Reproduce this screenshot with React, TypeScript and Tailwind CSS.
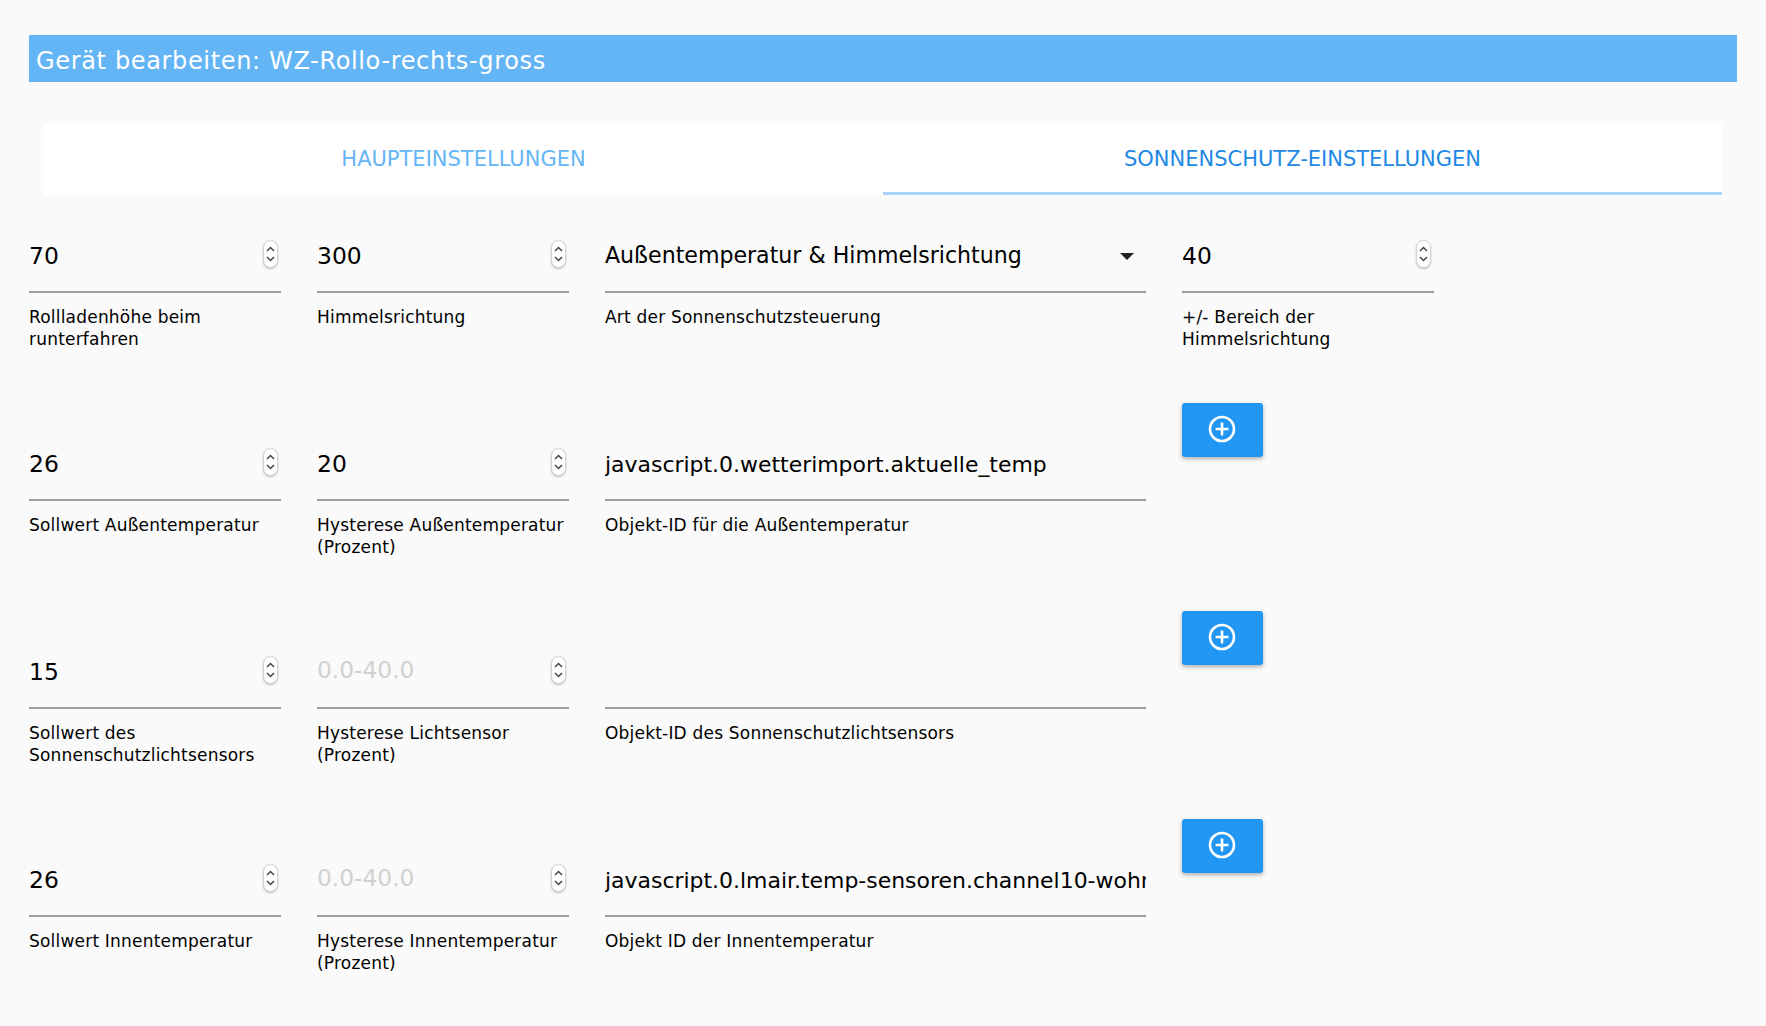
import React from "react";

const uiFont = "font-['DejaVu_Sans',sans-serif]";

function Spinner() {
  return (
    <span className="absolute right-[3px] top-[16px] w-[15px] h-[28px] rounded-[8px] bg-white border border-[#d4d4d4] shadow-[0_1px_2px_rgba(0,0,0,0.25)] flex items-center justify-center">
      <svg width="11" height="20" viewBox="0 0 11 20" fill="none" stroke="#444" strokeWidth="1.5">
        <path d="M2 7 5.500 3.500 9 7" />
        <path d="M2 13l3.500 3.500L9 13" />
      </svg>
    </span>
  );
}

function Field({
  value,
  placeholder,
  label,
  number,
  select,
}: {
  value?: string;
  placeholder?: string;
  label: string;
  number?: boolean;
  select?: boolean;
}) {
  return (
    <div className="min-w-0">
      <div className="relative h-[69px] border-b-2 border-[#9e9e9e] flex items-center pb-[3px]">
        {select ? (
          <span className={`${uiFont} text-[22.1px] text-black whitespace-nowrap`}>{value}</span>
        ) : value ? (
          <span className={`${uiFont} ${number ? "text-[23.4px]" : "text-[21.95px]"} pt-[2px] text-black whitespace-nowrap overflow-hidden w-full`}>{value}</span>
        ) : (
          <span className={`${uiFont} text-[23.3px] text-[#d1d1d1] whitespace-nowrap -mt-[4px]`}>{placeholder}</span>
        )}
        {number && <Spinner />}
        {select && (
          <span className="absolute right-[12px] top-[29px] w-0 h-0 border-l-[7px] border-r-[7px] border-t-[7px] border-l-transparent border-r-transparent border-t-[#222]" />
        )}
      </div>
      <div className={`${uiFont} mt-[13px] text-[17px] tracking-[0.2px] leading-[22px] text-black`}>{label}</div>
    </div>
  );
}

function AddButton() {
  return (
    <div className="self-start mt-[-29px] w-[81px] h-[54px] rounded-[3px] bg-[#2196f3] shadow-[0_2px_4px_rgba(0,0,0,0.3)] flex items-center justify-center">
      <svg width="32" height="32" viewBox="0 0 32 32" fill="none" stroke="#fff" strokeWidth="2.6" className="-ml-[1px]">
        <circle cx="16" cy="15" r="12" />
        <path d="M16 8.500v13M9.500 15h13" />
      </svg>
    </div>
  );
}

const rows = [
  [
    { value: "70", label: "Rollladenhöhe beim runterfahren", number: true },
    { value: "300", label: "Himmelsrichtung", number: true },
    { value: "Außentemperatur & Himmelsrichtung", label: "Art der Sonnenschutzsteuerung", select: true },
    { value: "40", label: "+/- Bereich der Himmelsrichtung", number: true },
  ],
  [
    { value: "26", label: "Sollwert Außentemperatur", number: true },
    { value: "20", label: "Hysterese Außentemperatur (Prozent)", number: true },
    { value: "javascript.0.wetterimport.aktuelle_temp", label: "Objekt-ID für die Außentemperatur" },
  ],
  [
    { value: "15", label: "Sollwert des Sonnenschutzlichtsensors", number: true },
    { placeholder: "0.0-40.0", label: "Hysterese Lichtsensor (Prozent)", number: true },
    { value: "", placeholder: "", label: "Objekt-ID des Sonnenschutzlichtsensors" },
  ],
  [
    { value: "26", label: "Sollwert Innentemperatur", number: true },
    { placeholder: "0.0-40.0", label: "Hysterese Innentemperatur (Prozent)", number: true },
    { value: "javascript.0.lmair.temp-sensoren.channel10-wohnzimmer", label: "Objekt ID der Innentemperatur" },
  ],
];

export default function App() {
  return (
    <div className="w-[1766px] h-[1026px] overflow-hidden bg-[#fafafa] pt-[35px] pl-[29px] pr-[29px]">
      <div className={`${uiFont} h-[47px] bg-[#64b5f6] text-white text-[24px] tracking-[0.65px] flex items-center pl-[7px] pt-[5px]`}>
        Gerät bearbeiten: WZ-Rollo-rechts-gross
      </div>

      <div className="mt-[41px] mx-[15px] h-[72px] bg-white grid grid-cols-2">
        <div className={`${uiFont} flex items-center justify-center text-[21px] text-[#64b5f6] pt-[2px]`}>HAUPTEINSTELLUNGEN</div>
        <div className={`${uiFont} flex items-center justify-center text-[21px] text-[#1e88e5] border-b-[3px] border-[#a6d4fa] pt-[5px]`}>SONNENSCHUTZ-EINSTELLUNGEN</div>
      </div>

      <div className="mt-[29px] grid grid-cols-[252px_252px_541px_252px] gap-x-[36px] auto-rows-[208px]">
        {rows.map((row, i) => (
          <React.Fragment key={i}>
            {row.map((f, j) => (
              <Field key={j} {...f} />
            ))}
            {i > 0 && <AddButton />}
          </React.Fragment>
        ))}
      </div>
    </div>
  );
}
